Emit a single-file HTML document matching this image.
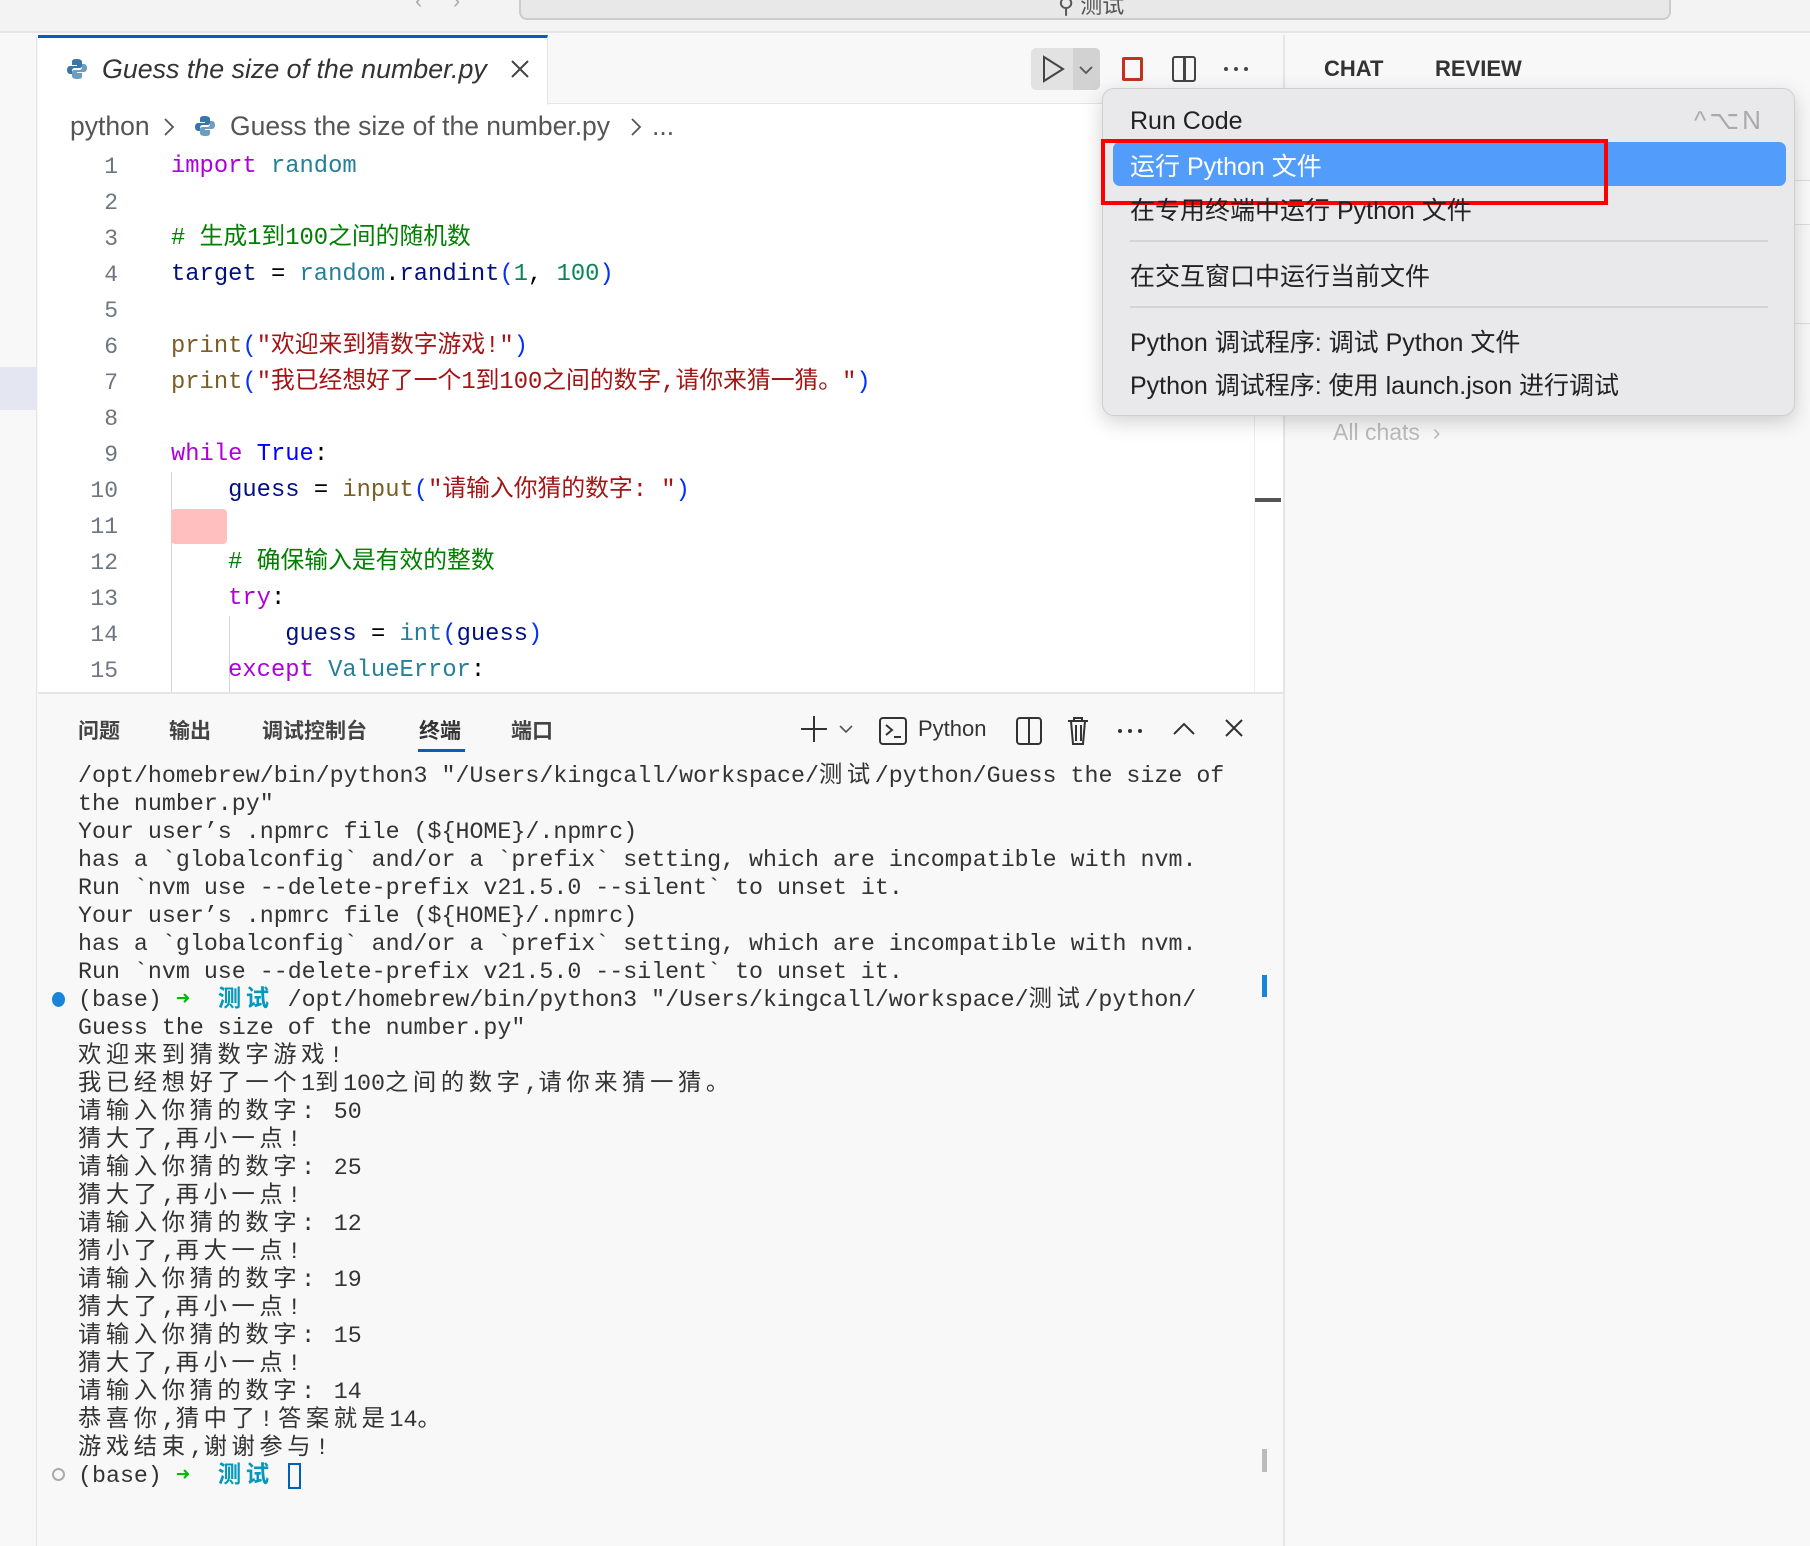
<!DOCTYPE html>
<html><head><meta charset="utf-8"><style>
*{margin:0;padding:0;box-sizing:border-box}
body{width:1810px;height:1546px;background:#f8f8f8;position:relative;overflow:hidden;font-family:"Liberation Sans","Noto Sans CJK SC",sans-serif;color:#333}
.a{position:absolute;white-space:pre}
.ln{position:absolute;left:60px;width:58px;text-align:right;font-size:23px;color:#6e7681;font-family:"Liberation Mono",monospace;line-height:36px}
.cl{position:absolute;left:171px;font-size:23.8px;line-height:36px;font-family:"Liberation Mono","Noto Sans CJK SC",monospace;white-space:pre;color:#001080}
.k{color:#af00db}.m{color:#267f99}.f{color:#795e26}.s{color:#a31515}.n{color:#098658}.c{color:#008000}.b{color:#0000ff}.p{color:#0431fa}
.t{position:absolute;left:78px;font-size:23.3px;line-height:28px;font-family:"Liberation Mono","Noto Sans CJK SC",monospace;white-space:pre;color:#333}
.z{letter-spacing:4.6px}
.mi{position:absolute;left:1130px;font-size:25px;color:#222;white-space:pre}
.pt{position:absolute;top:715px;font-size:21px;color:#444;font-weight:bold}
</style></head><body>
<!-- title bar -->
<div class="a" style="left:0;top:0;width:1810px;height:33px;background:#f3f3f3;border-bottom:2px solid #e5e5e5"></div>
<div class="a" style="left:519px;top:-10px;width:1152px;height:30px;background:#e8e8e8;border:2px solid #ccc;border-radius:8px"></div>
<div class="a" style="left:415px;top:-12px;font-size:22px;color:#aaa">‹&nbsp;&nbsp;&nbsp;&nbsp;&nbsp;›</div>
<div class="a" style="left:1058px;top:-12px;font-size:22px;color:#555">⚲ 测试</div>
<!-- left strip -->
<div class="a" style="left:0;top:35px;width:37px;height:1511px;background:#f8f8f8;border-right:1px solid #e5e5e5"></div>
<div class="a" style="left:0;top:367px;width:37px;height:43px;background:#e4e6f1"></div>
<!-- editor -->
<div class="a" style="left:38px;top:35px;width:1245px;height:657px;background:#fff"></div>
<div class="a" style="left:38px;top:35px;width:1245px;height:69px;background:#f8f8f8;border-bottom:1px solid #e5e5e5"></div>
<div class="a" style="left:38px;top:35px;width:510px;height:70px;background:#fff;border-top:3px solid #005fb8;border-right:1px solid #e5e5e5"></div>
<svg class="a" style="left:66px;top:58px" width="22" height="22" viewBox="0 0 22 22"><path d="M10 1c-4 0-4 2-4 3v3h5v1H4c-2 0-3 2-3 4s1 4 3 4h2v-3c0-2 1-3 3-3h5c1 0 2-1 2-2V4c0-2-2-3-6-3z" fill="#3a75a8"/><path d="M12 21c4 0 4-2 4-3v-3h-5v-1h7c2 0 3-2 3-4s-1-4-3-4h-2v3c0 2-1 3-3 3H8c-1 0-2 1-2 2v4c0 2 2 3 6 3z" fill="#6c9cbf"/></svg>
<div class="a" style="left:102px;top:54px;font-size:26.8px;font-style:italic;color:#333">Guess the size of the number.py</div>
<svg class="a" style="left:510px;top:59px" width="20" height="20"><path d="M2 2L18 18M18 2L2 18" stroke="#444" stroke-width="2"/></svg>
<!-- run buttons -->
<div class="a" style="left:1031px;top:48px;width:69px;height:42px;background:#e2e2e2;border-radius:5px"></div>
<div class="a" style="left:1073px;top:48px;width:27px;height:42px;background:#d2d2d2;border-radius:0 5px 5px 0"></div>
<svg class="a" style="left:1041px;top:55px" width="26" height="28"><path d="M3 2 L22 14 L3 26 Z" fill="none" stroke="#444" stroke-width="2"/></svg>
<svg class="a" style="left:1078px;top:64px" width="16" height="12"><path d="M2 3 L8 9 L14 3" fill="none" stroke="#555" stroke-width="1.8"/></svg>
<div class="a" style="left:1122px;top:57px;width:21px;height:24px;border:3px solid #c0341d;border-radius:2px"></div>
<div class="a" style="left:1172px;top:56px;width:24px;height:26px;border:2.5px solid #444;border-radius:3px"></div>
<div class="a" style="left:1183px;top:56px;width:2.5px;height:26px;background:#444"></div>
<svg class="a" style="left:1222px;top:66px" width="28" height="6"><circle cx="4" cy="3" r="2" fill="#444"/><circle cx="14" cy="3" r="2" fill="#444"/><circle cx="24" cy="3" r="2" fill="#444"/></svg>
<!-- breadcrumb -->
<div class="a" style="left:70px;top:111px;font-size:26.5px;color:#555">python</div>
<svg class="a" style="left:163px;top:117px" width="12" height="20"><path d="M2 2l8 8-8 8" fill="none" stroke="#555" stroke-width="1.8"/></svg>
<svg class="a" style="left:194px;top:115px" width="22" height="22" viewBox="0 0 22 22"><path d="M10 1c-4 0-4 2-4 3v3h5v1H4c-2 0-3 2-3 4s1 4 3 4h2v-3c0-2 1-3 3-3h5c1 0 2-1 2-2V4c0-2-2-3-6-3z" fill="#3a75a8"/><path d="M12 21c4 0 4-2 4-3v-3h-5v-1h7c2 0 3-2 3-4s-1-4-3-4h-2v3c0 2-1 3-3 3H8c-1 0-2 1-2 2v4c0 2 2 3 6 3z" fill="#6c9cbf"/></svg>
<div class="a" style="left:230px;top:111px;font-size:26.5px;color:#555">Guess the size of the number.py</div>
<svg class="a" style="left:630px;top:117px" width="12" height="20"><path d="M2 2l8 8-8 8" fill="none" stroke="#555" stroke-width="1.8"/></svg>
<div class="a" style="left:652px;top:111px;font-size:26.5px;color:#555">...</div>
<!-- line numbers -->
<div class="ln" style="top:149px">1<br>2<br>3<br>4<br>5<br>6<br>7<br>8<br>9<br>10<br>11<br>12<br>13<br>14<br>15</div>
<div class="a" style="left:171px;top:472px;width:1px;height:220px;background:#d3d3d3"></div>
<div class="a" style="left:229px;top:616px;width:1px;height:76px;background:#d3d3d3"></div>
<div class="a" style="left:171px;top:509px;width:56px;height:35px;background:#ffbfbf;border-radius:4px"></div>
<div class="cl" style="top:149px"><span class="k">import</span> <span class="m">random</span>

<span class="c"># 生成1到100之间的随机数</span>
target <span style="color:#000">=</span> <span class="m">random</span><span style="color:#000">.</span>randint<span class="p">(</span><span class="n">1</span><span style="color:#000">, </span><span class="n">100</span><span class="p">)</span>

<span class="f">print</span><span class="p">(</span><span class="s">"欢迎来到猜数字游戏!"</span><span class="p">)</span>
<span class="f">print</span><span class="p">(</span><span class="s">"我已经想好了一个1到100之间的数字,请你来猜一猜。"</span><span class="p">)</span>

<span class="k">while</span> <span class="b">True</span><span style="color:#000">:</span>
    guess <span style="color:#000">=</span> <span class="f">input</span><span class="p">(</span><span class="s">"请输入你猜的数字: "</span><span class="p">)</span>

    <span class="c"># 确保输入是有效的整数</span>
    <span class="k">try</span><span style="color:#000">:</span>
        guess <span style="color:#000">=</span> <span class="m">int</span><span class="p">(</span>guess<span class="p">)</span>
    <span class="k">except</span> <span class="m">ValueError</span><span style="color:#000">:</span></div>
<div class="a" style="left:1254px;top:104px;width:1px;height:588px;background:#eee"></div>
<div class="a" style="left:1255px;top:498px;width:26px;height:4px;background:#555"></div>
<!-- panel -->
<div class="a" style="left:38px;top:692px;width:1245px;height:854px;background:#f8f8f8;border-top:2px solid #e5e5e5"></div>
<div class="pt" style="left:78px">问题</div>
<div class="pt" style="left:169px">输出</div>
<div class="pt" style="left:262px">调试控制台</div>
<div class="pt" style="left:419px;color:#333">终端</div>
<div class="a" style="left:418px;top:749px;width:47px;height:3px;background:#005fb8"></div>
<div class="pt" style="left:511px">端口</div>
<svg class="a" style="left:798px;top:712px" width="360" height="34">
<path d="M16 4v26M3 17h26" stroke="#333" stroke-width="2"/>
<path d="M42 14l6 6 6-6" fill="none" stroke="#555" stroke-width="1.6"/>
<rect x="82" y="6" width="26" height="26" rx="3" fill="none" stroke="#333" stroke-width="2"/>
<path d="M88 13l6 5-6 5M96 25h7" fill="none" stroke="#333" stroke-width="2"/>
<rect x="219" y="6" width="24" height="26" rx="3" fill="none" stroke="#333" stroke-width="2"/><path d="M231 6v26" stroke="#333" stroke-width="2"/>
<path d="M270 9h20M276 9v-3h8v3M273 9l2 23h10l2-23M278 13v16M283 13v16" fill="none" stroke="#333" stroke-width="2"/>
<circle cx="322" cy="19" r="2" fill="#333"/><circle cx="332" cy="19" r="2" fill="#333"/><circle cx="342" cy="19" r="2" fill="#333"/>
</svg>
<div class="a" style="left:918px;top:716px;font-size:22px;color:#333">Python</div>
<svg class="a" style="left:1170px;top:712px" width="80" height="34"><path d="M4 22l10-10 10 10" fill="none" stroke="#333" stroke-width="2"/><path d="M56 8l16 16M72 8L56 24" stroke="#333" stroke-width="2"/></svg>
<!-- terminal -->
<div class="t" style="top:762px">/opt/homebrew/bin/python3 "/Users/kingcall/workspace/<span class="z">测试</span>/python/Guess the size of
the number.py"
Your user’s .npmrc file (${HOME}/.npmrc)
has a `globalconfig` and/or a `prefix` setting, which are incompatible with nvm.
Run `nvm use --delete-prefix v21.5.0 --silent` to unset it.
Your user’s .npmrc file (${HOME}/.npmrc)
has a `globalconfig` and/or a `prefix` setting, which are incompatible with nvm.
Run `nvm use --delete-prefix v21.5.0 --silent` to unset it.
(base) <span style="color:#00bc00">➜</span>  <b class="z" style="color:#0598bc">测试</b> /opt/homebrew/bin/python3 "/Users/kingcall/workspace/<span class="z">测试</span>/python/
Guess the size of the number.py"
<span class="z">欢迎来到猜数字游戏!</span>
<span class="z">我已经想好了一个</span>1<span class="z">到</span>100<span class="z">之间的数字</span>,<span class="z">请你来猜一猜。</span>
<span class="z">请输入你猜的数字:</span> 50
<span class="z">猜大了</span>,<span class="z">再小一点!</span>
<span class="z">请输入你猜的数字:</span> 25
<span class="z">猜大了</span>,<span class="z">再小一点!</span>
<span class="z">请输入你猜的数字:</span> 12
<span class="z">猜小了</span>,<span class="z">再大一点!</span>
<span class="z">请输入你猜的数字:</span> 19
<span class="z">猜大了</span>,<span class="z">再小一点!</span>
<span class="z">请输入你猜的数字:</span> 15
<span class="z">猜大了</span>,<span class="z">再小一点!</span>
<span class="z">请输入你猜的数字:</span> 14
<span class="z">恭喜你</span>,<span class="z">猜中了!答案就是</span>14<span class="z">。</span>
<span class="z">游戏结束</span>,<span class="z">谢谢参与!</span>
(base) <span style="color:#00bc00">➜</span>  <b class="z" style="color:#0598bc">测试</b> <span style="display:inline-block;width:13px;height:26px;border:2px solid #005fb8;vertical-align:middle"></span></div>
<div class="a" style="left:52px;top:992px;width:13px;height:15px;border-radius:50%;background:#1a85d8"></div>
<div class="a" style="left:52px;top:1468px;width:13px;height:13px;border-radius:50%;border:2px solid #aaa"></div>
<div class="a" style="left:1262px;top:975px;width:5px;height:22px;background:#1a85d8"></div>
<div class="a" style="left:1262px;top:1449px;width:5px;height:23px;background:#bbb"></div>
<!-- right panel -->
<div class="a" style="left:1283px;top:35px;width:527px;height:1511px;background:#f8f8f8;border-left:2px solid #e5e5e5"></div>
<div class="a" style="left:1324px;top:56px;font-size:22px;font-weight:bold;color:#333">CHAT</div>
<div class="a" style="left:1435px;top:56px;font-size:22px;font-weight:bold;color:#333">REVIEW</div>
<div class="a" style="left:1333px;top:419px;font-size:23px;color:#bbb">All chats  ›</div>
<div class="a" style="left:1790px;top:180px;width:20px;height:45px;border:1px solid #ddd;border-right:none;background:#fafafa"></div>
<div class="a" style="left:1790px;top:323px;width:20px;height:45px;border-top:1px solid #ddd"></div>
<!-- dropdown -->
<div class="a" style="left:1102px;top:88px;width:693px;height:328px;background:#e9e9eb;border:1px solid #cfcfcf;border-radius:12px;box-shadow:0 6px 20px rgba(0,0,0,.18)"></div>
<div class="mi" style="top:107px">Run Code</div>
<div class="a" style="left:1694px;top:105px;font-size:26px;color:#aaa;letter-spacing:3px">^⌥N</div>
<div class="a" style="left:1113px;top:142px;width:673px;height:44px;background:#529cfb;border-radius:7px"></div>
<div class="mi" style="top:147px;color:#fff">运行 Python 文件</div>
<div class="a" style="left:1101px;top:139px;width:507px;height:66px;border:4px solid #ff0000"></div>
<div class="mi" style="top:191px">在专用终端中运行 Python 文件</div>
<div class="a" style="left:1130px;top:240px;width:638px;height:2px;background:#d4d4d6"></div>
<div class="mi" style="top:257px">在交互窗口中运行当前文件</div>
<div class="a" style="left:1130px;top:306px;width:638px;height:2px;background:#d4d4d6"></div>
<div class="mi" style="top:323px">Python 调试程序: 调试 Python 文件</div>
<div class="mi" style="top:366px">Python 调试程序: 使用 launch.json 进行调试</div>
</body></html>
